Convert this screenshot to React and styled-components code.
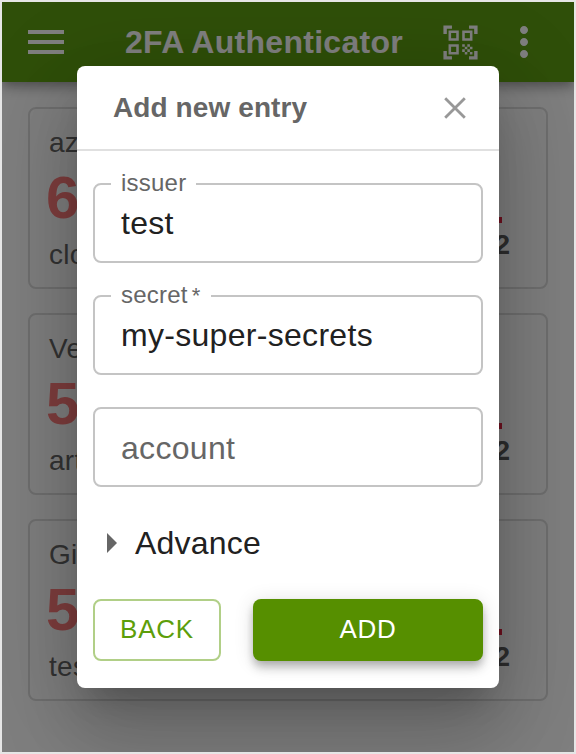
import React from "react";
import styled, { createGlobalStyle } from "styled-components";

const GlobalStyle = createGlobalStyle`
  *, *::before, *::after { box-sizing: border-box; }
  body {
    margin: 0;
    overflow: hidden;
    font-family: "Liberation Sans", Helvetica, Arial, sans-serif;
    -webkit-font-smoothing: antialiased;
  }
`;

const Window = styled.div`
  position: relative;
  width: 576px;
  height: 754px;
  border: 2px solid #e6e6e6;
  background: #fff;
  overflow: hidden;
`;

const AppBar = styled.header`
  display: flex;
  align-items: center;
  height: 80px;
  padding: 0 26px 0 20px;
  background: #5e9e12;
  color: #fff;
  box-shadow: 0 4px 8px -2px rgba(0, 0, 0, 0.2), 0 8px 10px rgba(0, 0, 0, 0.14),
    0 2px 20px rgba(0, 0, 0, 0.12);
`;

const AppTitle = styled.h1`
  flex: 1;
  margin: 0 0 0 55px;
  font-size: 32px;
  line-height: 40px;
  font-weight: 700;
  letter-spacing: 0.28px;
  white-space: nowrap;
`;

const Icon = styled.svg`
  flex: none;
  display: block;
  width: ${(p) => p.$size}px;
  height: ${(p) => p.$size}px;
  margin-right: ${(p) => p.$gap || 0}px;
  fill: currentColor;
`;

const EntryList = styled.main`
  display: flex;
  flex-direction: column;
  gap: 24px;
  padding: 25px 26px;
`;

const EntryCard = styled.article`
  display: flex;
  justify-content: space-between;
  height: 182px;
  padding: 0 36px 0 19px;
  border: 2px solid #dedede;
  border-radius: 8px;
`;

const EntryInfo = styled.div`
  padding-top: 17px;
`;

const EntryLabel = styled.div`
  font-size: 28px;
  line-height: 34px;
  letter-spacing: 0.3px;
  color: #666;
`;

const Code = styled.div`
  margin: 0 0 0 -3px;
  height: 78px;
  padding-top: 8px;
  font-size: 60px;
  line-height: 60px;
  font-weight: 700;
  color: #ff7c7c;
`;

const Timer = styled.div`
  display: flex;
  flex-direction: column;
  align-items: flex-end;
  padding-top: 108px;
`;

const TimerBar = styled.div`
  width: 22px;
  height: 6px;
  margin-right: 8px;
  background: #e02440;
`;

const TimerValue = styled.div`
  margin-top: 7px;
  font-size: 28px;
  line-height: 30px;
  font-weight: 700;
  color: #5c5c5c;
`;

const Backdrop = styled.div`
  position: absolute;
  inset: 0;
  display: flex;
  align-items: center;
  justify-content: center;
  background: rgba(0, 0, 0, 0.5);
`;

const Dialog = styled.section`
  width: 422px;
  height: 622px;
  border-radius: 8px;
  background: #fff;
  color: rgba(0, 0, 0, 0.87);
  box-shadow: 0 22px 30px -14px rgba(0, 0, 0, 0.2),
    0 48px 76px 6px rgba(0, 0, 0, 0.14), 0 18px 92px 16px rgba(0, 0, 0, 0.12);
`;

const DialogHeader = styled.header`
  display: flex;
  align-items: center;
  justify-content: space-between;
  height: 85px;
  padding: 0 33px 0 36px;
  border-bottom: 2px solid #e0e0e0;
`;

const DialogTitle = styled.h2`
  margin: 0;
  font-size: 28px;
  line-height: 34px;
  font-weight: 700;
  letter-spacing: 0.1px;
  color: #666;
`;

const CloseButton = styled.button`
  display: block;
  padding: 0;
  border: 0;
  background: none;
  color: #989898;
`;

const Form = styled.form`
  display: flex;
  flex-direction: column;
  gap: 32px;
  padding: 32px 16px 0;
`;

const Field = styled.label`
  position: relative;
  display: flex;
  align-items: center;
  height: 80px;
  padding: ${(p) => (p.$empty ? "2px" : "0")} 26px 0;
  border: 2px solid #c4c4c4;
  border-radius: 8px;
  font-size: 32px;
  line-height: 40px;
  letter-spacing: 0.3px;
  color: ${(p) => (p.$empty ? "#666" : "#212121")};
`;

const FieldLabel = styled.span`
  position: absolute;
  top: -16px;
  left: 16px;
  padding: 0 10px;
  background: #fff;
  font-size: 24px;
  line-height: 28px;
  letter-spacing: 0.225px;
  color: #666;
`;

const RequiredMark = styled.span`
  margin-left: 4px;
  font-size: 22px;
`;

const AdvanceRow = styled.div`
  display: flex;
  align-items: center;
  height: 48px;
  padding-left: 14px;
  font-size: 32px;
  line-height: 40px;
  letter-spacing: 0.2px;
  color: #212121;
`;

const Arrow = styled.span`
  width: 0;
  height: 0;
  margin-right: 18px;
  border: 10px solid transparent;
  border-left-color: #666;
  border-right-width: 0;
`;

const Actions = styled.div`
  display: flex;
  gap: 32px;
`;

const Button = styled.button`
  flex: ${(p) => (p.$primary ? "1" : "0 0 128px")};
  height: 62px;
  padding: 0 0 2px;
  border: ${(p) => (p.$primary ? "0" : "2px solid #b1cf87")};
  border-radius: 8px;
  background: ${(p) => (p.$primary ? "#568f00" : "#fff")};
  color: ${(p) => (p.$primary ? "#fff" : "#5d9e0a")};
  font: 26px/40px "Liberation Sans", Helvetica, Arial, sans-serif;
  letter-spacing: 0.74px;
  box-shadow: ${(p) =>
    p.$primary
      ? "0 4px 8px -2px rgba(0,0,0,.2), 0 8px 10px rgba(0,0,0,.14), 0 2px 20px rgba(0,0,0,.12)"
      : "none"};
`;

const entries = [
  { issuer: "azure", code: "612", account: "cloud", left: "12" },
  { issuer: "Vercel", code: "504", account: "artist", left: "12" },
  { issuer: "GitHub", code: "538", account: "test", left: "12" },
];

export default function App() {
  return (
    <Window>
      <GlobalStyle />
      <AppBar>
        <Icon $size={48} viewBox="0 0 24 24">
          <path d="M3 18h18v-2H3v2zm0-5h18v-2H3v2zm0-7v2h18V6H3z" />
        </Icon>
        <AppTitle>2FA Authenticator</AppTitle>
        <Icon $size={41} $gap={19} viewBox="0 0 24 24">
          <path d="M9.5 6.5v3h-3v-3h3M11 5H5v6h6V5zm-1.5 9.5v3h-3v-3h3M11 13H5v6h6v-6zm6.5-6.5v3h-3v-3h3M19 5h-6v6h6V5zm-6 8h1.5v1.5H13V13zm1.5 1.5H16V16h-1.5v-1.5zM16 13h1.5v1.5H16V13zm-3 3h1.5v1.5H13V16zm1.5 1.5H16V19h-1.5v-1.5zM16 16h1.5v1.5H16V16zm1.5-1.5H19V16h-1.5v-1.5zm0 3H19V19h-1.5v-1.5zM22 7h-2V4h-3V2h5v5zm0 15v-5h-2v3h-3v2h5zM2 22h5v-2H4v-3H2v5zM2 2v5h2V4h3V2H2z" />
        </Icon>
        <Icon $size={48} viewBox="0 0 24 24">
          <path d="M12 8c1.1 0 2-.9 2-2s-.9-2-2-2-2 .9-2 2 .9 2 2 2zm0 2c-1.1 0-2 .9-2 2s.9 2 2 2 2-.9 2-2-.9-2-2-2zm0 6c-1.1 0-2 .9-2 2s.9 2 2 2 2-.9 2-2-.9-2-2-2z" />
        </Icon>
      </AppBar>
      <EntryList>
        {entries.map((entry) => (
          <EntryCard key={entry.issuer}>
            <EntryInfo>
              <EntryLabel>{entry.issuer}</EntryLabel>
              <Code>{entry.code}</Code>
              <EntryLabel>{entry.account}</EntryLabel>
            </EntryInfo>
            <Timer>
              <TimerBar />
              <TimerValue>{entry.left}</TimerValue>
            </Timer>
          </EntryCard>
        ))}
      </EntryList>
      <Backdrop>
        <Dialog role="dialog" aria-label="Add new entry">
          <DialogHeader>
            <DialogTitle>Add new entry</DialogTitle>
            <CloseButton type="button" aria-label="Close">
              <Icon $size={22} viewBox="0 0 22 22">
                <path d="M1.2 1.2l19.6 19.6M20.8 1.2l-19.6 19.6" stroke="currentColor" strokeWidth="2.8" />
              </Icon>
            </CloseButton>
          </DialogHeader>
          <Form>
            <Field>
              <FieldLabel>issuer</FieldLabel>
              test
            </Field>
            <Field>
              <FieldLabel>
                secret<RequiredMark>*</RequiredMark>
              </FieldLabel>
              my-super-secrets
            </Field>
            <Field $empty>account</Field>
            <AdvanceRow>
              <Arrow />
              Advance
            </AdvanceRow>
            <Actions>
              <Button type="button">BACK</Button>
              <Button type="button" $primary>
                ADD
              </Button>
            </Actions>
          </Form>
        </Dialog>
      </Backdrop>
    </Window>
  );
}
